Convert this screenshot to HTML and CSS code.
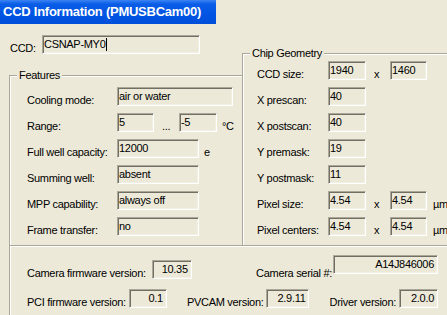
FILE: index.html
```html
<!DOCTYPE html>
<html lang="en">
<head>
  <meta charset="UTF-8">
  <title>CCD Information</title>
  <link rel="stylesheet" href="styles.css">
</head>
<body>
  <div class="titlebar">CCD Information (PMUSBCam00)</div>

  <div class="upper">
    <div class="left">
      <div class="ccd-row">
        <span class="lbl ccd-lbl">CCD:</span>
        <div class="field ccd-field">CSNAP-MY0<span class="caret"></span></div>
      </div>

      <!-- Features group -->
      <div class="group features">
        <span class="legend">Features</span>
        <div class="row">
          <span class="lbl">Cooling mode:</span>
          <div class="field f-wide">air or water</div>
        </div>
        <div class="row">
          <span class="lbl">Range:</span>
          <div class="field f-short">5</div>
          <span class="dots">...</span>
          <div class="field f-short2">-5</div>
          <span class="unit">°C</span>
        </div>
        <div class="row">
          <span class="lbl">Full well capacity:</span>
          <div class="field f-mid">12000</div>
          <span class="unit">e</span>
        </div>
        <div class="row">
          <span class="lbl">Summing well:</span>
          <div class="field f-mid">absent</div>
        </div>
        <div class="row">
          <span class="lbl">MPP capability:</span>
          <div class="field f-mid">always off</div>
        </div>
        <div class="row">
          <span class="lbl">Frame transfer:</span>
          <div class="field f-mid">no</div>
        </div>
      </div>
    </div>

    <!-- Chip Geometry group -->
    <div class="group geometry">
      <span class="legend">Chip Geometry</span>
      <div class="row">
        <span class="lbl">CCD size:</span>
        <div class="field g-a">1940</div>
        <span class="times">x</span>
        <div class="field g-b">1460</div>
      </div>
      <div class="row">
        <span class="lbl">X prescan:</span>
        <div class="field g-a">40</div>
      </div>
      <div class="row">
        <span class="lbl">X postscan:</span>
        <div class="field g-a">40</div>
      </div>
      <div class="row">
        <span class="lbl">Y premask:</span>
        <div class="field g-a">19</div>
      </div>
      <div class="row">
        <span class="lbl">Y postmask:</span>
        <div class="field g-a">11</div>
      </div>
      <div class="row">
        <span class="lbl">Pixel size:</span>
        <div class="field g-a">4.54</div>
        <span class="times">x</span>
        <div class="field g-b">4.54</div>
        <span class="unit um">µm</span>
      </div>
      <div class="row">
        <span class="lbl">Pixel centers:</span>
        <div class="field g-a">4.54</div>
        <span class="times">x</span>
        <div class="field g-b">4.54</div>
        <span class="unit um">µm</span>
      </div>
    </div>
  </div>

  <!-- Versions -->
  <div class="info">
    <div class="info-row first">
      <div class="pair">
        <span class="lbl">Camera firmware version:</span>
        <div class="field num fw-field">10.35</div>
      </div>
      <div class="pair tight">
        <span class="lbl">Camera serial #:</span>
        <div class="field num serial-field">A14J846006</div>
      </div>
    </div>
    <div class="info-row second">
      <div class="pair">
        <span class="lbl">PCI firmware version:</span>
        <div class="field num pci-field">0.1</div>
      </div>
      <div class="pair">
        <span class="lbl">PVCAM version:</span>
        <div class="field num pvcam-field">2.9.11</div>
      </div>
      <div class="pair">
        <span class="lbl">Driver version:</span>
        <div class="field num drv-field">2.0.0</div>
      </div>
    </div>
  </div>
</body>
</html>
```

FILE: styles.css
```css
body {
  margin: 0;
  background: #ece9d8;
  color: #000;
  font: 11px/13px "Liberation Sans", Arial, sans-serif;
  letter-spacing: -0.3px;
  overflow: hidden;
}

.titlebar {
  width: 216px;
  height: 24px;
  box-sizing: border-box;
  padding-left: 3px;
  color: #fff;
  font: bold 13px/24px "Liberation Sans", Arial, sans-serif;
  letter-spacing: -0.25px;
  white-space: nowrap;
  overflow: hidden;
  background: linear-gradient(#3b84f4, #0a5de6 4px, #0054e3 60%, #004fd9);
}

.upper {
  display: grid;
  grid-template-columns: 233px 1fr;
  margin-left: 9px;
}

.left {
  display: flex;
  flex-direction: column;
}

.ccd-row {
  display: flex;
  align-items: flex-end;
  margin-top: 11px;
  padding-left: 1px;
}

.ccd-lbl { width: 32px; }
.ccd-field { width: 158px; padding-left: 2px; }

.caret {
  display: inline-block;
  width: 1px;
  height: 13px;
  margin-left: 1px;
  vertical-align: top;
  background: #000;
}

/* group boxes */
.group {
  position: relative;
  display: flex;
  flex-direction: column;
  gap: 7px;
  border-top: 1px solid #aca899;
  border-left: 1px solid #aca899;
  box-shadow: inset 1px 1px 0 #fff;
}

.features {
  flex: 1;
  margin-top: 21px;
  padding: 11px 0 9px 17px;
}

.geometry {
  margin-top: 29px;
  padding: 7px 0 9px 14px;
}

.legend {
  position: absolute;
  top: -7px;
  left: 7px;
  padding: 0 2px;
  background: #ece9d8;
  line-height: 13px;
}

.row {
  display: flex;
  align-items: flex-end;
  height: 19px;
}

.lbl {
  flex: none;
  line-height: 13px;
  margin-bottom: -1px;
  white-space: nowrap;
}

.features .lbl { width: 90px; }
.geometry .lbl { width: 71px; }

/* sunken fields */
.field {
  flex: none;
  box-sizing: border-box;
  height: 19px;
  padding: 2px 2px 0 1px;
  border: 1px solid;
  border-color: #aca899 #fff #fff #aca899;
  box-shadow: inset 1px 1px 0 #716f64, inset -1px -1px 0 #f1efe2;
  line-height: 13px;
  white-space: nowrap;
  overflow: hidden;
}

.f-wide { width: 116px; }
.f-mid { width: 82px; }
.f-short { width: 37px; }
.f-short2 { width: 38px; }
.g-a { width: 38px; }
.g-b { width: 37px; }

.dots {
  width: 25px;
  box-sizing: border-box;
  padding-left: 8px;
  margin-bottom: -1px;
}

.times {
  width: 24px;
  box-sizing: border-box;
  padding-left: 8px;
  margin-bottom: -1px;
}

.unit {
  margin-left: 5px;
  margin-bottom: -1px;
  white-space: nowrap;
}

.um { margin-left: 6px; }

/* versions */
.info {
  min-height: 70px;
  box-sizing: border-box;
  margin-left: 9px;
  padding: 9px 9px 0 17px;
  border-top: 1px solid #aca899;
  border-left: 1px solid #aca899;
  box-shadow: inset 1px 1px 0 #fff;
}

.info-row {
  display: flex;
  align-items: flex-end;
  justify-content: space-between;
}

.first { height: 24px; }
.second { height: 19px; margin-top: 10px; }

.pair {
  display: flex;
  align-items: flex-end;
  gap: 3px;
  height: 100%;
}

.first .pair:first-child { gap: 6px; }
.pair.tight { gap: 1px; }
.pair.tight .field { align-self: flex-start; }

.num {
  text-align: right;
  padding-right: 3px;
}

.fw-field { width: 40px; }
.serial-field { width: 105px; }
.pci-field { width: 38px; }
.pvcam-field { width: 43px; }
.drv-field { width: 39px; }
```
